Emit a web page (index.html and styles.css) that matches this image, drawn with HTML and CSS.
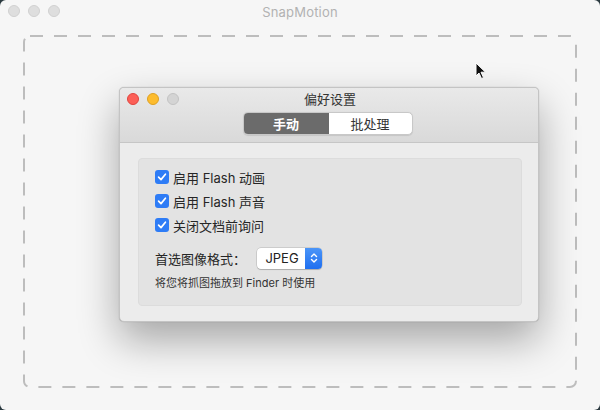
FILE: index.html
```html
<!DOCTYPE html>
<html lang="zh-CN">
<head>
<meta charset="utf-8">
<title>SnapMotion</title>
<link rel="stylesheet" href="styles.css">
</head>
<body>
<div class="app">
  <div class="titlebar">
    <div class="lights">
      <span class="light gray"></span>
      <span class="light gray"></span>
      <span class="light gray"></span>
    </div>
    <div class="app-title">SnapMotion</div>
  </div>
  <div class="canvas">
    <svg class="drop" width="554" height="353" viewBox="0 0 554 353">
      <rect x="1" y="1" width="552" height="351" rx="6" ry="6" fill="none" stroke="#bdbdbd" stroke-width="2" stroke-dasharray="13 11"/>
    </svg>
    <svg class="cursor" width="12" height="18" viewBox="0 0 12 18">
      <path d="M1 1 L1 14 L4 11 L6.5 16.5 L8.5 15.6 L6 10.2 L10.5 10.2 Z" fill="#111" stroke="#fff" stroke-width="1"/>
    </svg>
    <div class="dialog">
      <div class="toolbar">
        <div class="dlg-head">
          <div class="lights dlg-lights">
            <span class="light red"></span>
            <span class="light yellow"></span>
            <span class="light dim"></span>
          </div>
          <div class="dlg-title">偏好设置</div>
        </div>
        <div class="segmented">
          <span class="seg active">手动</span>
          <span class="seg">批处理</span>
        </div>
      </div>
      <div class="content">
        <div class="group">
          <label class="check"><span class="box"><svg width="10" height="10" viewBox="0 0 10 10"><path d="M1.6 5.2 L4 7.6 L8.4 2.2" fill="none" stroke="#fff" stroke-width="1.7" stroke-linecap="round" stroke-linejoin="round"/></svg></span>启用 Flash 动画</label>
          <label class="check"><span class="box"><svg width="10" height="10" viewBox="0 0 10 10"><path d="M1.6 5.2 L4 7.6 L8.4 2.2" fill="none" stroke="#fff" stroke-width="1.7" stroke-linecap="round" stroke-linejoin="round"/></svg></span>启用 Flash 声音</label>
          <label class="check"><span class="box"><svg width="10" height="10" viewBox="0 0 10 10"><path d="M1.6 5.2 L4 7.6 L8.4 2.2" fill="none" stroke="#fff" stroke-width="1.7" stroke-linecap="round" stroke-linejoin="round"/></svg></span>关闭文档前询问</label>
          <div class="format-row">
            <span class="format-label">首选图像格式：</span>
            <span class="popup">
              <span class="popup-value">JPEG</span>
              <span class="stepper"><svg width="8" height="12" viewBox="0 0 8 12"><path d="M1.5 4.5 L4 2 L6.5 4.5 M1.5 7.5 L4 10 L6.5 7.5" fill="none" stroke="#fff" stroke-width="1.4" stroke-linecap="round" stroke-linejoin="round"/></svg></span>
            </span>
          </div>
          <div class="hint">将您将抓图拖放到 Finder 时使用</div>
        </div>
      </div>
    </div>
  </div>
</div>
</body>
</html>
```

FILE: styles.css
```css
* { box-sizing: border-box; }
html, body { margin: 0; padding: 0; }
body {
  width: 600px;
  height: 410px;
  background: #2b3a40;
  font-family: Inter, "Noto Sans CJK SC", sans-serif;
  overflow: hidden;
}
.app {
  width: 600px;
  height: 410px;
  background: #f6f6f6;
  border-radius: 6px;
  display: flex;
  flex-direction: column;
  overflow: hidden;
}
.titlebar {
  height: 24px;
  position: relative;
  display: flex;
  align-items: center;
  justify-content: center;
  flex: none;
}
.lights {
  position: absolute;
  left: 8px;
  top: 5px;
  display: flex;
  gap: 8px;
}
.light {
  width: 12px;
  height: 12px;
  border-radius: 50%;
  display: block;
}
.light.gray { background: #dedede; border: 1px solid #d0d0d0; }
.light.red { background: #fc5f57; border: 1px solid #e0443e; }
.light.yellow { background: #fdbc2e; border: 1px solid #dea123; }
.light.dim { background: #d4d4d4; border: 1px solid #c3c3c3; }
.app-title {
  font-size: 13px;
  color: #b2b2b2;
  letter-spacing: 0.2px;
}
.canvas {
  position: relative;
  flex: 1;
  padding: 11px 23px 0 23px;
}
.drop { display: block; }
.cursor {
  position: absolute;
  left: 475px;
  top: 38px;
}
.dialog {
  position: absolute;
  left: 119px;
  top: 63px;
  width: 420px;
  height: 235px;
  border-radius: 5px;
  background: #ececec;
  border: 1px solid #c4c4c4;
  box-shadow: 0 18px 40px rgba(0,0,0,0.33), 0 0 1px rgba(0,0,0,0.3);
  display: flex;
  flex-direction: column;
  overflow: hidden;
}
.toolbar {
  height: 55px;
  flex: none;
  background: linear-gradient(#e9e9e9, #d9d9d9);
  border-bottom: 1px solid #c6c6c6;
  display: flex;
  flex-direction: column;
  align-items: center;
}
.dlg-head {
  position: relative;
  height: 24px;
  width: 100%;
  display: flex;
  justify-content: center;
  align-items: center;
  padding-bottom: 3px;
}
.dlg-lights { left: 7px; top: 5px; }
.dlg-title {
  font-size: 13px;
  color: #333;
  margin-left: 2px;
}
.segmented {
  display: flex;
  height: 23px;
  width: 170px;
  border-radius: 5px;
  overflow: hidden;
  border: 1px solid #c8c8c8;
  background: #fff;
  margin-left: -3px;
  box-shadow: 0 0.5px 1px rgba(0,0,0,0.1);
}
.seg {
  display: flex;
  align-items: center;
  justify-content: center;
  font-size: 13px;
  color: #333;
  flex: 1;
}
.seg.active {
  flex: none;
  width: 85px;
  background: #6b6b6b;
  color: #fff;
  font-weight: 600;
}
.content {
  flex: 1;
  padding: 15px 16px 15px 18px;
  display: flex;
}
.group {
  flex: 1;
  background: #e3e3e3;
  border: 1px solid #dcdcdc;
  border-radius: 4px;
  padding: 6px 16px 0 16px;
  display: flex;
  flex-direction: column;
}
.check {
  display: flex;
  align-items: center;
  height: 24px;
  font-size: 13px;
  color: #262626;
}
.box {
  width: 14px;
  height: 14px;
  border-radius: 3px;
  background: #2e7cf6;
  display: flex;
  align-items: center;
  justify-content: center;
  margin-right: 4px;
}
.box svg { display: block; }
.format-row {
  display: flex;
  align-items: center;
  margin-top: 10px;
  height: 22px;
}
.format-label {
  font-size: 13px;
  color: #262626;
  width: 102px;
}
.popup {
  display: flex;
  height: 21px;
  width: 65px;
  background: #fff;
  border-radius: 4px;
  box-shadow: 0 0 0 0.5px rgba(0,0,0,0.2), 0 1px 1px rgba(0,0,0,0.15);
  overflow: hidden;
}
.popup-value {
  flex: 1;
  display: flex;
  align-items: center;
  justify-content: center;
  font-size: 13px;
  color: #222;
  padding-left: 2px;
}
.stepper {
  width: 17px;
  background: linear-gradient(#4b95f8, #1f6ff0);
  display: flex;
  align-items: center;
  justify-content: center;
}
.hint {
  font-size: 11px;
  color: #333;
  margin-top: 5px;
}
```
